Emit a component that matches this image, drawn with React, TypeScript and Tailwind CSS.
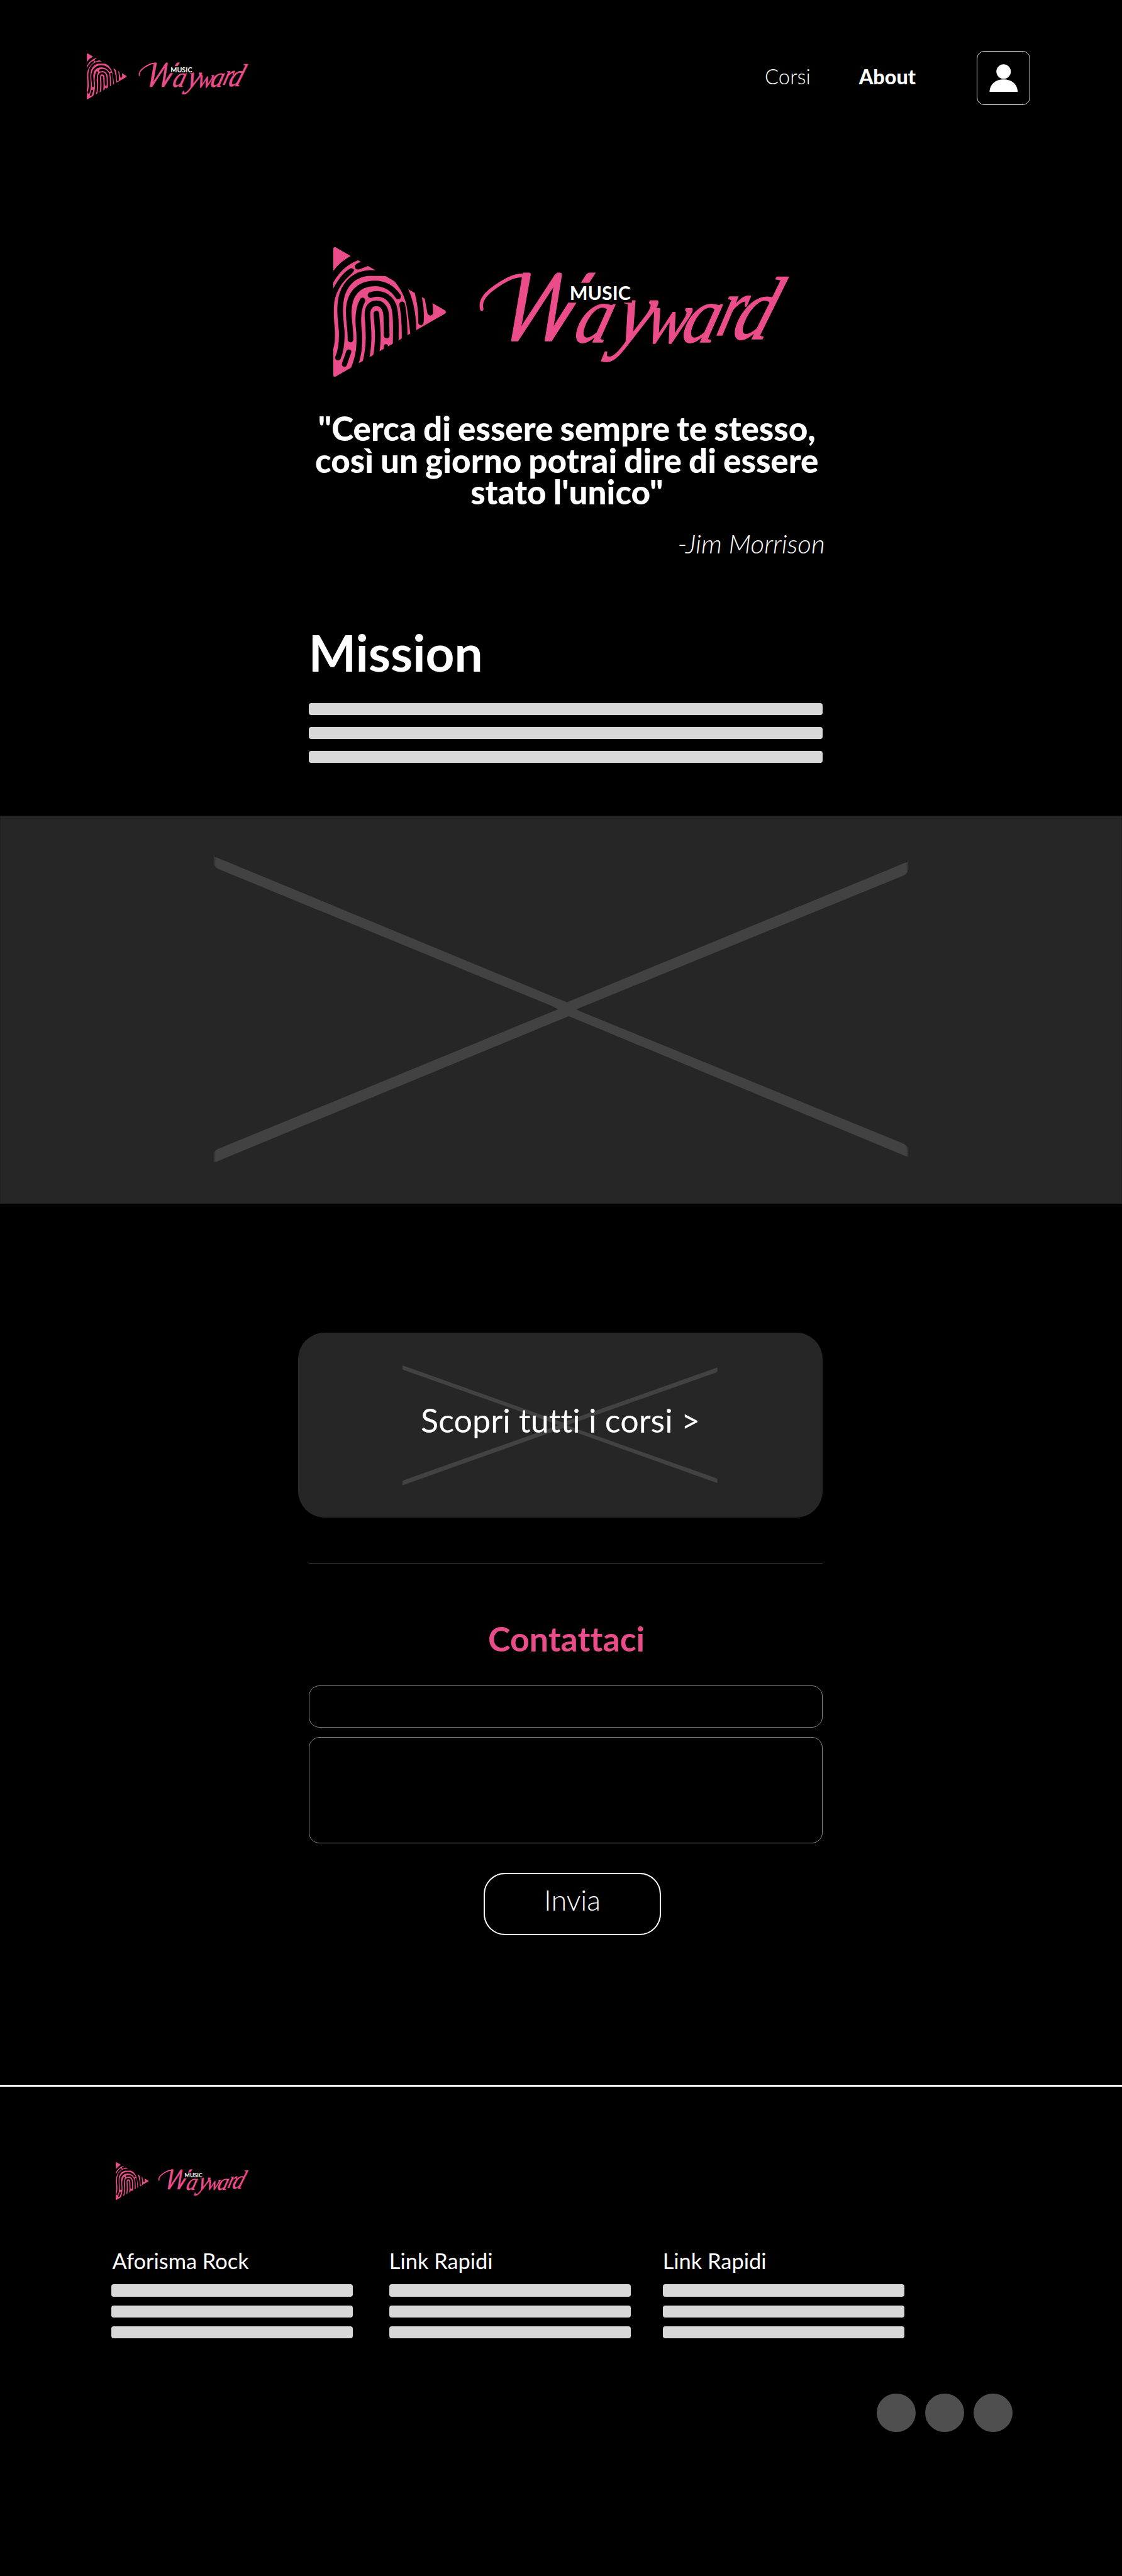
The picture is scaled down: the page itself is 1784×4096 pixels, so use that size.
const SERIF = "'Liberation Serif', serif";

const LETTERS = [
  { c: 'W', font: 'Lato, sans-serif', x: 281, y: 160, size: 162, sx: 0.82, sy: 1, skew: -17 },
  { c: 'a', font: SERIF, x: 408, y: 162, size: 138, sx: 0.88, sy: 1, skew: -16 },
  { c: 'y', font: SERIF, x: 478, y: 163, size: 134, sx: 1.02, sy: 1.15, skew: -14 },
  { c: 'w', font: SERIF, x: 530, y: 164, size: 128, sx: 0.86, sy: 1, skew: -12 },
  { c: 'a', font: SERIF, x: 592, y: 162, size: 138, sx: 0.88, sy: 1, skew: -16 },
  { c: 'r', font: SERIF, x: 652, y: 151, size: 130, sx: 0.85, sy: 1.1, skew: -16 },
  { c: 'd', font: SERIF, x: 678, y: 157, size: 153, sx: 0.84, sy: 1, skew: -19 },
];

function Logo({ className }: { className: string }) {
  return (
    <svg viewBox="0 0 779 222" className={className} overflow="visible">
      <g transform="translate(-20.67 -23) scale(0.33333)" strokeLinecap="round" fill="none">
        <path fill="#eb4d8a" d="M62 78Q62 66 74 70L634 393Q646 402 634 411L74 733Q62 738 62 726Z" />
        <path fill="#000" d="M62 191Q95 145 150 115L160 100L210 120L190 136Q110 165 62 250H54V191Z" />
        <path fill="#000" d="M210 142L202 145Q172 155 172 170Q176 187 195 183L240 166L250 160Z" />
        <path fill="#000" d="M62 281Q105 200 152 177Q169 176 168 190Q160 203 140 220Q80 275 67 350Q61 410 69 480Q74 550 62 590H54V281Z" />
        <g stroke="#000" strokeWidth="29">
          <path d="M86 636C102 600 107 560 105 500C98 430 90 370 108 310C130 245 180 204 250 201L345 203" />
          <path d="M150 543C152 500 141 450 141 400C142 310 190 256 275 255C330 255 370 285 395 322" />
          <path d="M160 710C200 620 196 560 195 510C187 450 185 390 212 343" />
          <path d="M253 315C300 298 350 315 372 370C384 410 384 460 382 580" />
          <path d="M415 363C426 410 429 460 428 560" />
          <path d="M226 665C250 570 243 500 238 430C232 375 258 357 283 357C315 357 334 385 334 430L336 523" />
          <path d="M283 410C287 470 299 530 280 635" />
          <path d="M141 607L119 670" strokeWidth="26" />
          <path d="M332 577V610" strokeWidth="20" />
        </g>
        <path fill="#000" d="M345 215Q430 285 443 400L459 525H490L488 492Q486 370 447 285L440 265Z" />
        <path fill="#000" d="M478 295L480 303Q500 380 498 455Q500 470 512 470Q526 468 526 450Q530 390 517 327L515 315Z" />
        <path fill="#000" d="M530 328L532 335Q540 380 545 408Q550 420 562 420Q576 416 575 400L571 357L570 350Z" />
      </g>
      <g fill="#eb4d8a" stroke="#eb4d8a" strokeWidth="1.5" strokeLinejoin="round" fontStyle="italic">
        {LETTERS.map((l, i) => (
          <text
            key={i}
            fontFamily={l.font}
            fontSize={l.size}
            transform={`translate(${l.x} ${l.y}) skewX(${l.skew}) scale(${l.sx} ${l.sy})`}
          >
            {l.c}
          </text>
        ))}
      </g>
      <path d="M254 106C250 90 262 78 280 66C302 51 322 44 332 52" fill="none" stroke="#eb4d8a" strokeWidth="6" strokeLinecap="round" />
      <rect x="403" y="61" width="108" height="34" fill="#000" />
      <text x="404.5" y="90" fontSize="32.7" fontWeight="700" fill="#fff" fontFamily="Lato, sans-serif">MUSIC</text>
    </svg>
  );
}

function Cross({ className }: { className: string }) {
  return (
    <svg viewBox="367 1466 1186 524" preserveAspectRatio="none" className={className}>
      <path fill="#424242" d="M367 1466L970 1715.3L1553 1475V1491Q1553 1495 1546 1498.5L986 1727.5L996 1732L1543 1956Q1553 1960 1553 1966V1980L973.4 1739L367 1989.5V1973Q367 1969 374 1966L955 1727.3L945 1722L379 1489.5Q367 1485 367 1480Z" />
    </svg>
  );
}

function Bars({ className }: { className: string }) {
  return (
    <div className={className}>
      {[0, 1, 2].map((i) => (
        <div key={i} className="h-[19.5px] rounded-[4px] bg-[#d8d8d8]" />
      ))}
    </div>
  );
}

function FooterColumn({ title, className }: { title: string; className: string }) {
  return (
    <div className="w-[384.7px]">
      <h3 className={className}>{title}</h3>
      <Bars className="mt-[20px] flex flex-col gap-[13.95px]" />
    </div>
  );
}

export default function App() {
  return (
    <div className="min-h-[4096px] w-[1784px] overflow-hidden bg-black font-[Lato,sans-serif] text-white [font-variant-ligatures:none]">
      <header className="flex h-[167px] items-start pr-[145.8px] pl-[137.5px]">
        <Logo className="mt-[84.6px] h-[73.1px] w-[256.6px]" />
        <nav className="mt-[106px] ml-auto flex leading-none">
          <a className="w-[149.7px] text-[32.8px] font-light">Corsi</a>
          <a className="w-[187px] text-[32.3px] font-black">About</a>
        </nav>
        <div className="mt-[81px] flex h-[86px] w-[85.5px] justify-center rounded-[12px] border border-[#e4e4e4]">
          <svg viewBox="0 0 49 48" className="mt-[20px] h-[44.6px] w-[45.5px]" fill="#fff">
            <circle cx="24.5" cy="12.7" r="12.4" />
            <path d="M0.3 47.5C1 34 11 26.2 24.5 26.2S48 34 48.7 47.5Z" />
          </svg>
        </div>
      </header>

      <main>
        <Logo className="mt-[226px] ml-[530.3px] h-[206.3px] w-[723.8px]" />
        <div className="ml-[491.4px] w-[816.4px]">
          <h1 className="mt-[56.6px] pl-[3.4px] text-center text-[53px] leading-[50.8px] font-black whitespace-nowrap [word-spacing:-1.6px]">
            "Cerca di essere sempre te stesso,<br />così un giorno potrai dire di essere<br />stato l'unico"
          </h1>
          <p className="mt-[35px] -mr-[4px] text-right text-[42.2px] leading-none font-light italic">-Jim Morrison</p>
          <h2 className="mt-[112px] -ml-[1px] text-[80.1px] leading-none font-bold">Mission</h2>
          <Bars className="mt-[40px] flex flex-col gap-[18.6px]" />
        </div>

        <section className="mt-[83.9px] flex h-[616.7px] items-start border border-[#1f1f1f] bg-[#262626]">
          <Cross className="mt-[63.5px] ml-[340px] h-[486.9px] w-[1102px]" />
        </section>

        <a className="relative mt-[205.3px] ml-[473.7px] flex h-[293.5px] w-[833.9px] justify-center rounded-[42px] bg-[#262626]">
          <Cross className="absolute top-[51.6px] left-[166.5px] h-[191px] w-[500.7px]" />
          <span className="relative mt-[113.3px] ml-[1px] text-[52.1px] leading-none">Scopri tutti i corsi &gt;</span>
        </a>

        <form className="mt-[73.6px] ml-[491.4px] w-[816.8px] border-t border-[#3c3c3c]">
          <h2 className="mt-[91.5px] pl-[1.6px] text-center text-[53.7px] leading-none font-bold text-[#eb4d8a]">Contattaci</h2>
          <div className="mt-[47.2px] h-[67.6px] rounded-[17px] border border-[#858585]" />
          <div className="mt-[14.9px] h-[169.1px] rounded-[17px] border border-[#858585]" />
          <div className="mt-[46.5px] ml-[278px] h-[99.4px] w-[281.3px] rounded-[34px] border-2 border-white pt-[19px] text-center text-[45px] leading-none font-light">
            Invia
          </div>
        </form>
      </main>

      <footer className="mt-[238.4px] border-t-[3px] border-white">
        <Logo className="mt-[119.6px] ml-[183.7px] h-[60.1px] w-[211px]" />
        <div className="mt-[79.5px] flex pl-[176.5px] text-[34.4px] leading-none">
          <FooterColumn title="Aforisma Rock" className="pl-[2px]" />
          <div className="w-[57.6px]" />
          <FooterColumn title="Link Rapidi" className="" />
          <div className="w-[50.2px]" />
          <FooterColumn title="Link Rapidi" className="" />
        </div>
        <div className="mt-[87.5px] ml-[1394.4px] flex gap-[15.4px]">
          {[0, 1, 2].map((i) => (
            <div key={i} className="size-[61.5px] rounded-full bg-[#4f4f4f]" />
          ))}
        </div>
      </footer>
    </div>
  );
}
